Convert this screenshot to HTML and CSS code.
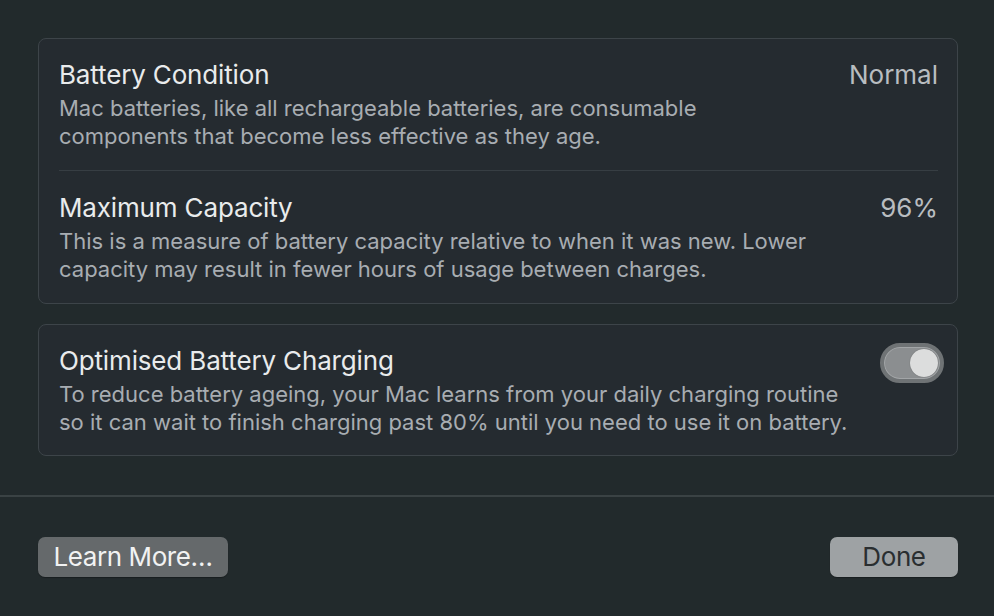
FILE: index.html
```html
<!DOCTYPE html>
<html lang="en">
<head>
<meta charset="utf-8">
<title>Battery Health</title>
<link rel="stylesheet" href="styles.css">
</head>
<body>
<div class="sheet">
  <div class="content">
    <section class="card">
      <div class="row">
        <div class="text">
          <div class="title">Battery Condition</div>
          <div class="desc">Mac batteries, like all rechargeable batteries, are consumable<br>components that become less effective as they age.</div>
        </div>
        <div class="value">Normal</div>
      </div>
      <div class="sep"></div>
      <div class="row row-second">
        <div class="text">
          <div class="title">Maximum Capacity</div>
          <div class="desc">This is a measure of battery capacity relative to when it was new. Lower<br>capacity may result in fewer hours of usage between charges.</div>
        </div>
        <div class="value">96%</div>
      </div>
    </section>
    <section class="card">
      <div class="row row-toggle">
        <div class="text">
          <div class="title">Optimised Battery Charging</div>
          <div class="desc">To reduce battery ageing, your Mac learns from your daily charging routine<br>so it can wait to finish charging past 80% until you need to use it on battery.</div>
        </div>
        <div class="toggle"><div class="knob"></div></div>
      </div>
    </section>
  </div>
  <div class="footer">
    <button class="btn btn-secondary">Learn More…</button>
    <button class="btn btn-primary">Done</button>
  </div>
</div>
</body>
</html>
```
FILE: styles.css
```css
* { box-sizing: border-box; }
html, body {
  margin: 0;
  padding: 0;
  background: #222a2c;
  width: 994px;
  height: 616px;
  overflow: hidden;
}
body {
  font-family: Inter, "Noto Sans", "Liberation Sans", sans-serif;
  -webkit-font-smoothing: antialiased;
}
.sheet {
  width: 994px;
  height: 616px;
  display: flex;
  flex-direction: column;
}
.content {
  padding: 38px 36px 0 38px;
  display: flex;
  flex-direction: column;
  gap: 20px;
  height: 497px;
  border-bottom: 2px solid #3a4244;
}
.card {
  background: #252b30;
  border: 1px solid #3d4449;
  border-radius: 8px;
  padding: 0 19px 0 20px;
}
.row {
  display: flex;
  justify-content: space-between;
  align-items: flex-start;
  padding: 21px 0 20px;
}
.row-second {
  padding: 22px 0 20px;
}
.row-toggle {
  padding: 21px 0 19px;
}
.sep {
  height: 1px;
  background: #373e43;
}
.title {
  color: #e9ebec;
  font-size: 26px;
  line-height: 30px;
  letter-spacing: -0.15px;
}
.desc {
  color: #a8adb2;
  font-size: 22px;
  line-height: 28px;
  margin-top: 4px;
}
.value {
  color: #b9bdc0;
  font-size: 26px;
  line-height: 30px;
}
.toggle {
  width: 64px;
  height: 40px;
  border-radius: 20px;
  background: #8b8e90;
  border: 4px solid #6f7375;
  margin-top: -3px;
  margin-right: -6px;
  display: flex;
  justify-content: flex-end;
  align-items: center;
  padding: 2px;
  box-shadow: inset 0 0 0 1px #a2a5a7;
}
.knob {
  width: 28px;
  height: 28px;
  border-radius: 50%;
  background: #dcdddd;
  box-shadow: 0 0 1px rgba(0,0,0,0.4);
}
.footer {
  display: flex;
  justify-content: space-between;
  align-items: flex-start;
  padding: 40px 36px 0 38px;
}
.btn {
  font-family: Inter, "Noto Sans", "Liberation Sans", sans-serif;
  font-size: 26px;
  height: 40px;
  border: none;
  border-radius: 7px;
  padding: 0;
  line-height: 40px;
  letter-spacing: -0.4px;
}
.btn-secondary {
  width: 190px;
  background: #65696b;
  color: #f1f2f2;
  box-shadow: 0 1px 1px rgba(0,0,0,0.3);
}
.btn-primary {
  width: 128px;
  background: #9ea2a4;
  color: #2a2e30;
  box-shadow: 0 1px 1px rgba(0,0,0,0.3);
}
```
